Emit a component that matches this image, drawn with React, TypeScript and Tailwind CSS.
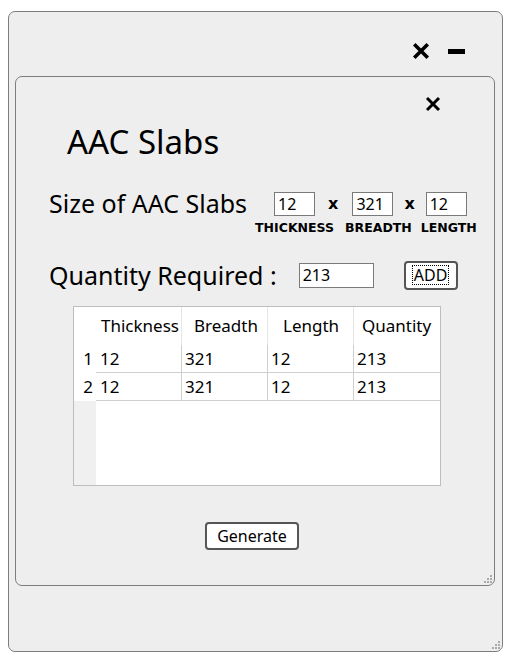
import React from "react";

const rows = [
  { thickness: "12", breadth: "321", length: "12", quantity: "213" },
  { thickness: "12", breadth: "321", length: "12", quantity: "213" },
];

function CloseIcon({ size, stroke }: { size: number; stroke: number }) {
  return (
    <svg width={size} height={size} viewBox="0 0 16 16">
      <path d="M2 2 L14 14 M14 2 L2 14" stroke="#000" strokeWidth={stroke} strokeLinecap="butt" />
    </svg>
  );
}

function Grip() {
  return (
    <div className="grid grid-cols-3 gap-[1px]">
      <span />
      <span />
      <span className="h-[2px] w-[2px] bg-[#aaa]" />
      <span />
      <span className="h-[2px] w-[2px] bg-[#aaa]" />
      <span className="h-[2px] w-[2px] bg-[#aaa]" />
      <span className="h-[2px] w-[2px] bg-[#aaa]" />
      <span className="h-[2px] w-[2px] bg-[#aaa]" />
      <span className="h-[2px] w-[2px] bg-[#aaa]" />
    </div>
  );
}

function SizeInput({ value }: { value: string }) {
  return (
    <div className="flex h-[24px] w-[41px] items-center border border-[#7a7a7a] bg-white pl-[3px] text-[16px] text-black">
      {value}
    </div>
  );
}

export default function App() {
  return (
    <div className="min-h-screen bg-white pl-[8px] pt-[11px] font-['Noto_Sans',sans-serif] text-black">
      <div className="relative flex h-[641px] w-[495px] flex-col rounded-[7px] border border-[#7d7d7d] bg-[#eeeeee]">
        {/* window controls */}
        <div className="flex h-[64px] items-start justify-end gap-[18px] pr-[37px] pt-[30px]">
          <CloseIcon size={18} stroke={3.2} />
          <div className="mt-[7px] h-[5px] w-[17px] bg-black" />
        </div>

        {/* inner panel */}
        <div className="relative ml-[6px] h-[510px] w-[480px] rounded-[7px] border border-[#7d7d7d] bg-[#eeeeee]">
          <div className="flex justify-end pr-[53px] pt-[19px]">
            <CloseIcon size={16} stroke={3} />
          </div>

          <h1 className="ml-[51px] mt-[10px] text-[33px] leading-[40px]">AAC Slabs</h1>

          {/* size row */}
          <div className="ml-[33px] mt-[30px] flex items-start">
            <div className="mt-[-4px] text-[25px] leading-[30px]">Size of AAC Slabs</div>
            <div className="ml-[8px] flex flex-col">
              <div className="ml-[19px] flex items-center">
                <SizeInput value="12" />
                <span className="ml-[13px] mr-[14px] font-['DejaVu_Sans',sans-serif] text-[16px] font-bold leading-[16px]">x</span>
                <SizeInput value="321" />
                <span className="mx-[11px] font-['DejaVu_Sans',sans-serif] text-[16px] font-bold leading-[16px]">x</span>
                <SizeInput value="12" />
              </div>
              <div className="mt-[4px] flex font-['DejaVu_Sans',sans-serif] text-[12.5px] font-bold leading-[16px]">
                <span>THICKNESS</span>
                <span className="ml-[11px]">BREADTH</span>
                <span className="ml-[9px]">LENGTH</span>
              </div>
            </div>
          </div>

          {/* quantity row */}
          <div className="ml-[33px] mt-[24px] flex items-center">
            <div className="text-[25px] leading-[30px]">Quantity Required :</div>
            <div className="ml-[22px] flex h-[25px] w-[75px] items-center border border-[#7a7a7a] bg-white pl-[3px] text-[16px]">
              213
            </div>
            <button className="ml-[30px] flex h-[29px] w-[54px] items-center justify-center rounded-[4px] border-2 border-[#555] bg-white p-[2px] text-[16px]">
              <span className="border border-dotted border-black px-[1px] leading-[18px]">ADD</span>
            </button>
          </div>

          {/* table */}
          <div className="ml-[57px] mt-[16px] flex h-[180px] w-[368px] border border-[#bdbdbd] bg-white text-[17px]">
            <div className="flex w-[22px] flex-col bg-[#f0f0f0]">
              <div className="h-[38px] bg-white" />
              <div className="flex h-[28px] items-center justify-end bg-white pr-[3px]">1</div>
              <div className="flex h-[28px] items-center justify-end bg-white pr-[3px]">2</div>
            </div>
            <div className="flex flex-1 flex-col">
              <div className="flex h-[38px]">
                <div className="flex w-[86px] items-center border-r border-[#e6e6e6] pl-[5px]">Thickness</div>
                <div className="flex w-[86px] items-center border-r border-[#e6e6e6] pl-[12px]">Breadth</div>
                <div className="flex w-[86px] items-center border-r border-[#e6e6e6] pl-[15px]">Length</div>
                <div className="flex flex-1 items-center pl-[8px]">Quantity</div>
              </div>
              {rows.map((r, i) => (
                <div key={i} className="flex h-[28px] border-b border-[#cfcfcf]">
                  <div className="flex w-[86px] items-center border-r border-[#cfcfcf] pl-[4px]">{r.thickness}</div>
                  <div className="flex w-[86px] items-center border-r border-[#cfcfcf] pl-[3px]">{r.breadth}</div>
                  <div className="flex w-[86px] items-center border-r border-[#cfcfcf] pl-[3px]">{r.length}</div>
                  <div className="flex flex-1 items-center pl-[3px]">{r.quantity}</div>
                </div>
              ))}
            </div>
          </div>

          {/* generate */}
          <div className="mt-[36px] flex justify-center pr-[6px]">
            <button className="flex h-[28px] w-[94px] items-center justify-center rounded-[4px] border-2 border-[#555] bg-white text-[16px]">
              Generate
            </button>
          </div>

          <div className="absolute bottom-[2px] right-[2px]">
            <Grip />
          </div>
        </div>

        <div className="absolute bottom-[2px] right-[2px]">
          <Grip />
        </div>
      </div>
    </div>
  );
}
